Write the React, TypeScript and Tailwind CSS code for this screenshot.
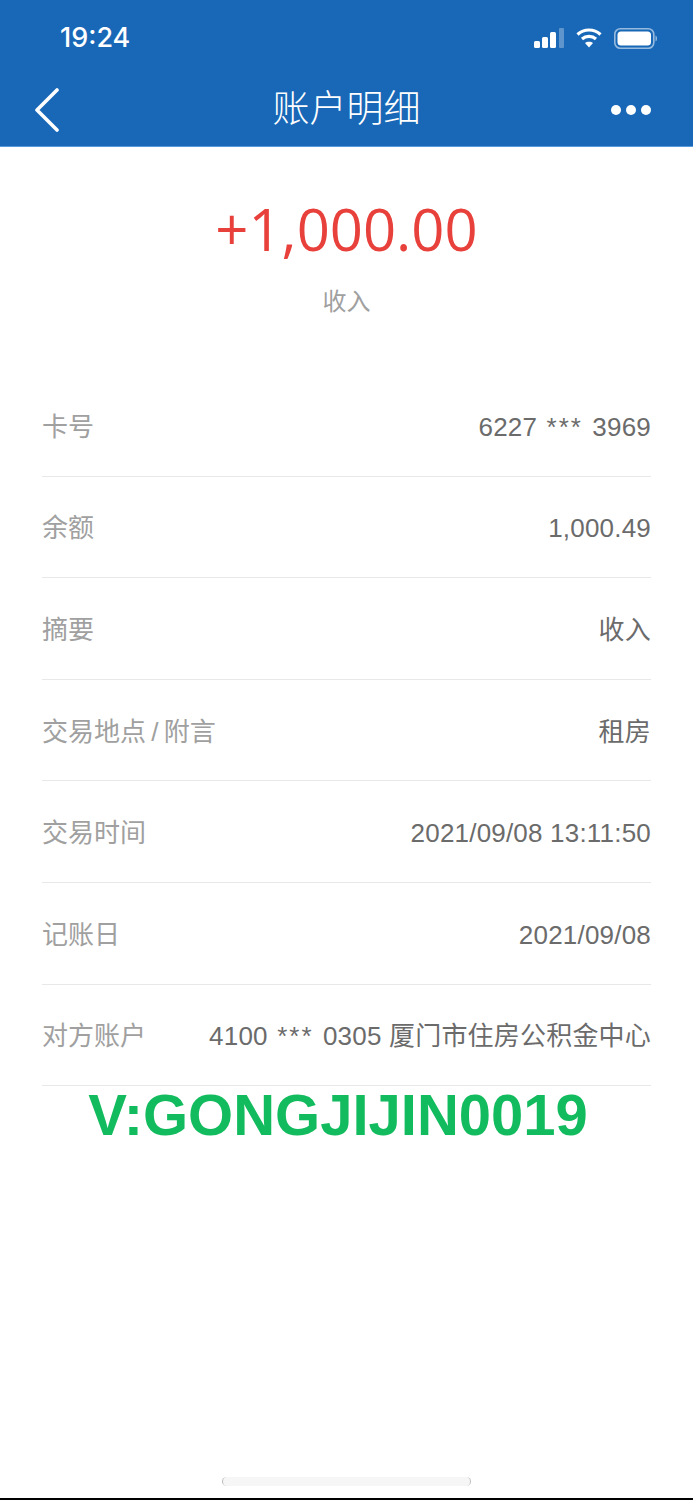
import { ReactNode } from "react";

function Stars() {
  return <span className="px-[2px] tracking-[2px]">***</span>;
}

const rows: [string, ReactNode][] = [
  ["卡号", <>6227 <Stars /> 3969</>],
  ["余额", "1,000.49"],
  ["摘要", "收入"],
  ["交易地点\u2009/\u2009附言", "租房"],
  ["交易时间", "2021/09/08 13:11:50"],
  ["记账日", "2021/09/08"],
  ["对方账户", <>4100 <Stars /> 0305 厦门市住房公积金中心</>],
];

function StatusIcons() {
  return (
    <div className="flex items-center">
      <svg width="31" height="20" viewBox="0 0 31 20" fill="white">
        <rect x="0" y="13" width="6" height="7" rx="1.5" />
        <rect x="8" y="9" width="6" height="11" rx="1.5" />
        <rect x="16" y="4" width="6" height="16" rx="1.5" />
        <rect x="25" y="0" width="5" height="20" rx="1" opacity="0.3" />
      </svg>
      <svg className="ml-[11px]" width="26" height="20" viewBox="0 0 26 20" fill="none" stroke="white" strokeWidth="3.2">
        <path d="M1.5 6.5 C8 0.5 18 0.5 24.5 6.5" />
        <path d="M6 11 C10 7.5 16 7.5 20 11" />
        <path d="M13 19.5 L9 15 C11 13.4 15 13.4 17 15 Z" fill="white" stroke="none" />
      </svg>
      <svg className="ml-[12px]" width="44" height="21" viewBox="0 0 44 21" fill="none">
        <rect x="0.8" y="0.8" width="39" height="19.4" rx="5.5" stroke="white" strokeOpacity="0.55" strokeWidth="1.6" />
        <rect x="3.5" y="3.5" width="33.5" height="14" rx="3.5" fill="white" />
        <path d="M41.5 7.5 C43.5 8 43.5 13 41.5 13.5 Z" fill="white" fillOpacity="0.55" />
      </svg>
    </div>
  );
}

export default function App() {
  return (
    <div
      className="relative flex h-[1500px] w-[693px] flex-col overflow-hidden bg-white"
      style={{ fontFamily: '"Liberation Sans", "Noto Sans CJK SC", sans-serif' }}
    >
      <div className="h-[147px] shrink-0 border-b border-[#5a9ade] bg-[#1868b7] text-white">
        <div className="flex h-[76px] items-center justify-between pl-[60px] pr-[35px]">
          <span className="text-[27px] font-medium" style={{ fontFamily: "Inter, sans-serif" }}>19:24</span>
          <StatusIcons />
        </div>
        <div className="relative flex h-[68px] items-center justify-between pl-[34px] pr-[42px]">
          <svg width="26" height="44" viewBox="0 0 26 44" fill="none" stroke="white" strokeWidth="3.6" strokeLinecap="round" strokeLinejoin="round">
            <path d="M23 2 L3 22 L23 42" />
          </svg>
          <span className="absolute left-0 right-0 text-center text-[37px] font-light">账户明细</span>
          <div className="flex gap-[5px]">
            <span className="h-[10px] w-[10px] rounded-full bg-white" />
            <span className="h-[10px] w-[10px] rounded-full bg-white" />
            <span className="h-[10px] w-[10px] rounded-full bg-white" />
          </div>
        </div>
      </div>

      <div className="flex flex-col items-center pt-[46px]">
        <div className="text-[58px] leading-[72px] text-[#e8413c]" style={{ fontFamily: '"Open Sans", sans-serif' }}>+1,000.00</div>
        <div className="mt-[19px] text-[24px] leading-[36px] text-[#a0a0a0]">收入</div>
      </div>

      <div className="mt-[55px] px-[42px]">
        {rows.map(([label, value], i) => (
          <div key={i} className="flex h-[101.6px] items-center justify-between border-b border-[#e8e8e8] pt-[4px] text-[26px]">
            <span className="text-[#a0a0a0]">{label}</span>
            <span className="tracking-[0.2px] text-[#6b6b6b]">{value}</span>
          </div>
        ))}
      </div>

      <div className="mr-[17px] mt-[-1px] text-center text-[58px] font-bold leading-[60px] text-[#12bb5e]">V:GONGJIJIN0019</div>

      <div className="absolute bottom-[14px] left-[222px] h-[9px] w-[249px] rounded-full border-x border-[#bbbbbb] bg-[#f6f6f6]" />
      <div className="absolute bottom-0 left-0 h-[2px] w-full bg-black" />
    </div>
  );
}
